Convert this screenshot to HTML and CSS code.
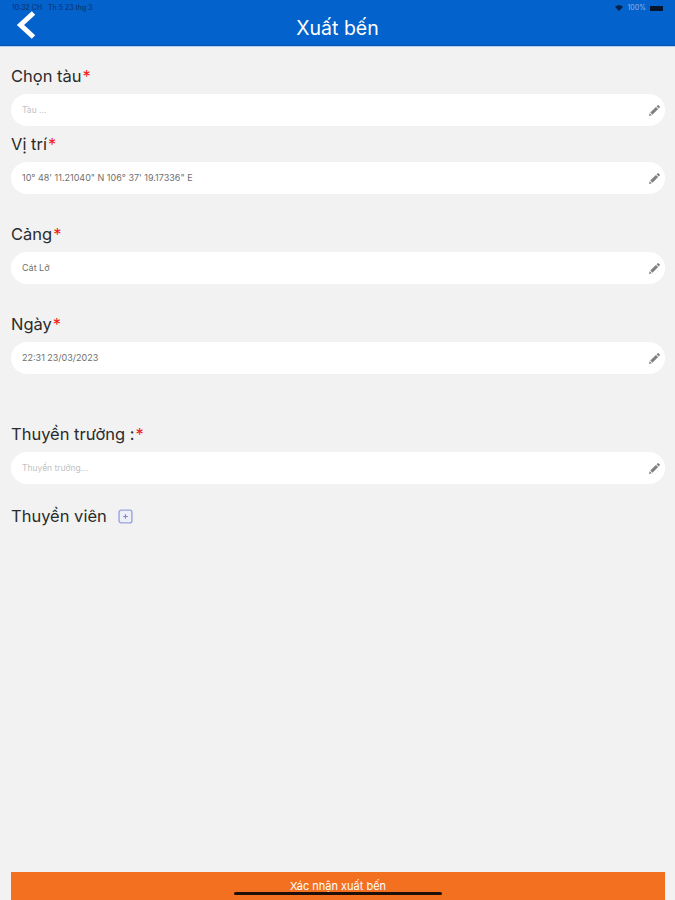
FILE: index.html
```html
<!DOCTYPE html>
<html lang="vi">
<head>
    <meta charset="utf-8">
    <title>Xuất bến</title>
    <link rel="stylesheet" href="styles.css">
</head>
<body>
    <div class="screen">
        <header class="topbar">
            <div class="status">
                <span>10:32 CH &nbsp; Th 5 23 thg 3</span>
                <span class="status-right">
                    <svg class="wifi" viewBox="0 0 12 9"><path d="M0 2.600C3.400-.6 8.600-.6 12 2.600L6 9z"/></svg>
                    <span>100%</span>
                    <span class="battery"></span>
                </span>
            </div>
            <svg class="back" viewBox="0 0 20 30"><path d="M17 3L4 15l13 12" fill="none" stroke="#fff" stroke-width="5"/></svg>
            <h1>Xuất bến</h1>
        </header>

        <main class="form">
            <div class="field field-ship">
                <label>Chọn tàu<span class="req">*</span></label>
                <div class="input placeholder">Tàu ...<svg class="pen" viewBox="0 0 14 14"><path d="M0 14l.8-3.600 2.800 2.800zM1.600 9.600L8.800 2.400l2.800 2.800-7.200 7.200zM9.600 1.600L11 .2q.5-.4 1 0l1.800 1.800q.4.5 0 1L12.400 4.400z"/></svg></div>
            </div>
            <div class="field field-pos">
                <label>Vị trí<span class="req">*</span></label>
                <div class="input">10° 48' 11.21040" N 106° 37' 19.17336" E<svg class="pen" viewBox="0 0 14 14"><path d="M0 14l.8-3.600 2.800 2.800zM1.600 9.600L8.800 2.400l2.800 2.800-7.200 7.200zM9.600 1.600L11 .2q.5-.4 1 0l1.800 1.800q.4.5 0 1L12.400 4.400z"/></svg></div>
            </div>
            <div class="field field-gap">
                <label>Cảng<span class="req">*</span></label>
                <div class="input">Cát Lở<svg class="pen" viewBox="0 0 14 14"><path d="M0 14l.8-3.600 2.800 2.800zM1.600 9.600L8.800 2.400l2.800 2.800-7.200 7.200zM9.600 1.600L11 .2q.5-.4 1 0l1.800 1.800q.4.5 0 1L12.400 4.400z"/></svg></div>
            </div>
            <div class="field field-gap">
                <label>Ngày<span class="req">*</span></label>
                <div class="input">22:31 23/03/2023<svg class="pen" viewBox="0 0 14 14"><path d="M0 14l.8-3.600 2.800 2.800zM1.600 9.600L8.800 2.400l2.800 2.800-7.200 7.200zM9.600 1.600L11 .2q.5-.4 1 0l1.800 1.800q.4.5 0 1L12.400 4.400z"/></svg></div>
            </div>
            <div class="field field-captain">
                <label>Thuyền trưởng :<span class="req">*</span></label>
                <div class="input placeholder">Thuyền trưởng...<svg class="pen" viewBox="0 0 14 14"><path d="M0 14l.8-3.600 2.800 2.800zM1.600 9.600L8.800 2.400l2.800 2.800-7.200 7.200zM9.600 1.600L11 .2q.5-.4 1 0l1.800 1.800q.4.5 0 1L12.400 4.400z"/></svg></div>
            </div>
            <div class="crew">
                <label>Thuyền viên</label>
                <svg class="add" viewBox="0 0 14 14"><rect x="1" y="1" width="12" height="12" rx="2" fill="#eef0f8" stroke="#9aa3de" stroke-width="1.300"/><path d="M7 4.800v4.400M4.800 7h4.400" stroke="#7f89cc" stroke-width="1.100"/></svg>
            </div>
        </main>

        <button class="confirm">Xác nhận xuất bến</button>
        <div class="home-bar"></div>
    </div>
</body>
</html>
```

FILE: styles.css
```css
* { box-sizing: border-box; }
html, body { margin: 0; padding: 0; }
body {
    font-family: 'Inter', 'Liberation Sans', sans-serif;
    background-color: #f2f2f2;
    overflow: hidden;
}
.screen {
    position: relative;
    width: 675px;
    height: 900px;
    display: flex;
    flex-direction: column;
}
.topbar {
    position: relative;
    height: 46px;
    flex: none;
    background: #0362cb;
    border-bottom: 1px solid #0353b4;
    box-shadow: 0 1px 0 #b9d0ee;
}
.topbar h1 {
    margin: 0;
    padding-top: 14px;
    text-align: center;
    font-size: 19.500px;
    line-height: 28px;
    font-weight: 400;
    color: #fff;
}
.status {
    position: absolute;
    left: 12px;
    right: 12px;
    top: 4px;
    display: flex;
    justify-content: space-between;
    align-items: center;
    font-size: 7px;
    line-height: 8px;
    color: #0b2f63;
}
.status-right { display: flex; align-items: center; gap: 4px; color: #8fb5e4; }
.wifi { width: 8px; height: 6px; fill: #08224a; }
.battery { width: 13px; height: 5px; background: #05152e; }
.back {
    position: absolute;
    left: 16px;
    top: 10px;
    width: 21px;
    height: 30px;
}
.form {
    flex: 1;
    padding: 0 10px 0 11px;
}
.field label, .crew label {
    display: block;
    font-size: 16.500px;
    line-height: 20px;
    color: #2b2b2b;
}
.req { margin-left: 1px; color: #f02020; }
.input {
    position: relative;
    height: 32px;
    margin-top: 8px;
    padding-left: 11px;
    background: #fff;
    border-radius: 16px;
    font-size: 9px;
    line-height: 32px;
    color: #707070;
}
.placeholder { font-size: 8.500px; color: #c2c2c2; }
.pen {
    position: absolute;
    right: 5px;
    top: 11px;
    width: 11px;
    height: 11px;
    fill: #808080;
}
.field-ship { margin-top: 20px; }
.field-pos { margin-top: 8px; }
.field-gap { margin-top: 30px; }
.field-captain { margin-top: 50px; }
.crew {
    display: flex;
    align-items: center;
    gap: 11px;
    margin-top: 22px;
}
.add { width: 15px; height: 15px; }
.confirm {
    flex: none;
    height: 28px;
    margin: 0 10px 0 11px;
    padding: 0;
    background: #f37021;
    border: none;
    font-family: inherit;
    font-size: 11px;
    color: #fff;
}
.home-bar {
    position: absolute;
    left: 234px;
    bottom: 5px;
    width: 208px;
    height: 3px;
    border-radius: 2px;
    background: #1e0f08;
}
```
